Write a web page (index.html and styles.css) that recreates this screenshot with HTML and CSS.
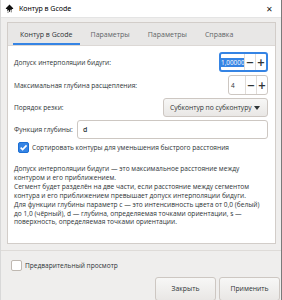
FILE: index.html
```html
<!DOCTYPE html>
<html lang="ru">
<head>
<meta charset="utf-8">
<title>Контур в Gcode</title>
<link rel="stylesheet" href="styles.css">
</head>
<body>
<div class="window">
  <div class="titlebar">
    <svg class="app-icon" width="9" height="9" viewBox="0 0 18 18"><path d="M9 1 L16 8 C17 9 16 10 15 10 L13 10 L14 12 C14.5 13 13.5 13.5 13 13 L11 11 L10 15 C10 16 8 16 8 15 L7.5 12 L5 13.5 C4 14 3.5 13 4 12.5 L5 10 L3 10 C2 10 1 9 2 8 Z" fill="#111"/><circle cx="6" cy="16" r="1.2" fill="#111"/><circle cx="12.5" cy="15.5" r="1" fill="#111"/></svg>
    <span class="title">Контур в Gcode</span>
    <span class="close">✕</span>
  </div>
  <div class="main">
    <div class="notebook">
      <div class="tabs">
        <div class="tab active">Контур в Gcode</div>
        <div class="tab">Параметры</div>
        <div class="tab">Параметры</div>
        <div class="tab">Справка</div>
      </div>
      <div class="page">
        <div class="row">
          <span class="label">Допуск интерполяции бидуги:</span>
          <div class="spin focused wide">
            <span class="spin-value"><span class="selected">1,00000</span></span>
            <span class="spin-btn">−</span>
            <span class="spin-btn">+</span>
          </div>
        </div>
        <div class="row">
          <span class="label">Максимальная глубина расщепления:</span>
          <div class="spin narrow">
            <span class="spin-value">4</span>
            <span class="spin-btn">−</span>
            <span class="spin-btn">+</span>
          </div>
        </div>
        <div class="row row-combo">
          <span class="label">Порядок резки:</span>
          <div class="combo">Субконтур по субконтуру <span class="arrow"></span></div>
        </div>
        <div class="row row-entry">
          <span class="label">Функция глубины:</span>
          <div class="entry">d</div>
        </div>
        <div class="check-row">
          <span class="checkbox checked"><svg width="9" height="9" viewBox="0 0 10 10"><path d="M1.8 5.2 L4 7.4 L8.4 2.6" fill="none" stroke="#fff" stroke-width="1.8"/></svg></span>
          <span class="check-label">Сортировать контуры для уменьшения быстрого расстояния</span>
        </div>
        <p class="help">Допуск интерполяции бидуги — это максимальное расстояние между контуром и его приближением.<br>Сегмент будет разделён на две части, если расстояние между сегментом контура и его приближением превышает допуск интерполяции бидуги.<br>Для функции глубины параметр c — это интенсивность цвета от 0,0 (белый) до 1,0 (чёрный), d — глубина, определяемая точками ориентации, s — поверхность, определяемая точками ориентации.</p>
      </div>
    </div>
  </div>
  <div class="separator"></div>
  <div class="preview-row">
    <span class="checkbox"></span>
    <span class="check-label">Предварительный просмотр</span>
  </div>
  <div class="buttons">
    <div class="button">Закрыть</div>
    <div class="button">Применить</div>
  </div>
</div>
</body>
</html>
```
FILE: styles.css
```css
* { box-sizing: border-box; }
html, body {
  margin: 0;
  padding: 0;
  width: 282px;
  height: 300px;
  overflow: hidden;
}
body {
  font-family: "Open Sans", "Noto Sans", sans-serif;
  font-size: 6.6px;
  color: #2e3436;
  background: #efeeed;
}
.window {
  height: 300px;
  display: flex;
  flex-direction: column;
  border-left: 1px solid #d8d8d8;
  border-right: 1px solid #7a7a7a;
}
.titlebar {
  height: 18px;
  flex: none;
  background: #fff;
  display: flex;
  align-items: center;
  padding-left: 4px;
  border-bottom: 1px solid #e4e4e4;
  font-family: "Noto Sans", sans-serif;
  font-size: 7px;
  color: #000;
}
.app-icon { margin-right: 5px; }
.title { flex: 1; }
.close {
  width: 20px;
  text-align: center;
  font-size: 8px;
  color: #222;
  margin-right: 2px;
}
.main {
  padding: 4px 5px 0 6px;
  flex: none;
}
.notebook {
  height: 222px;
  border: 1px solid #d2cdc9;
  display: flex;
  flex-direction: column;
  background: #fff;
}
.tabs {
  height: 23px;
  flex: none;
  background: #e8e7e6;
  display: flex;
  padding-left: 5px;
  border-bottom: 1px solid #dcd8d5;
}
.tab {
  padding: 0 7px;
  margin-right: 4px;
  display: flex;
  align-items: center;
  color: #5e6466;
  font-size: 7px;
  border-bottom: 2px solid transparent;
  padding-top: 2px;
}
.tab.active {
  color: #2e3436;
  border-bottom-color: #3584e4;
}
.page {
  flex: 1;
  padding: 6px 7px 0 6px;
  display: flex;
  flex-direction: column;
}
.row {
  height: 20px;
  display: flex;
  align-items: center;
  justify-content: space-between;
  margin-bottom: 3px;
}
.row-combo, .row-entry { height: 19px; }
.row-entry { margin-bottom: 2px; }
.label { white-space: nowrap; }
.spin {
  height: 100%;
  display: flex;
  border: 1px solid #cdc7c2;
  border-radius: 3px;
  background: #fff;
}
.spin.focused {
  border: 2px solid #3584e4;
}
.spin.wide { width: 49px; }
.spin.narrow { width: 40px; }
.spin-value {
  flex: 1;
  display: flex;
  align-items: center;
  padding-left: 2px;
  overflow: hidden;
  white-space: nowrap;
  font-size: 6.4px;
}
.spin.focused .spin-value { padding-left: 0; }
.selected {
  background: #3584e4;
  color: #fff;
}
.spin-btn {
  width: 11px;
  flex: none;
  display: flex;
  align-items: center;
  justify-content: center;
  border-left: 1px solid #e0dcd8;
  font-size: 10px;
  font-weight: bold;
  color: #2e3436;
  font-family: "DejaVu Sans", sans-serif;
}
.combo {
  width: 105px;
  height: 100%;
  border: 1px solid #cdc7c2;
  border-radius: 3px;
  background: linear-gradient(#f7f7f6, #e9e7e5);
  display: flex;
  align-items: center;
  justify-content: space-between;
  padding: 0 7px 0 6px;
  white-space: nowrap;
  font-size: 6.7px;
}
.arrow {
  width: 0;
  height: 0;
  border-left: 3.5px solid transparent;
  border-right: 3.5px solid transparent;
  border-top: 4px solid #2e3436;
}
.entry {
  width: 191px;
  height: 100%;
  border: 1px solid #cdc7c2;
  border-radius: 3px;
  display: flex;
  align-items: center;
  padding-left: 5px;
  font-weight: 600;
  font-size: 7px;
}
.check-row, .preview-row {
  display: flex;
  align-items: center;
  height: 13px;
}
.check-row { padding-left: 4px; }
.checkbox {
  width: 11px;
  height: 11px;
  flex: none;
  border: 1px solid #bfb8b1;
  border-radius: 2px;
  background: #fff;
  display: flex;
  align-items: center;
  justify-content: center;
  margin-right: 3px;
}
.checkbox.checked {
  background: #3584e4;
  border-color: #1c6fd4;
}
.help {
  margin: 11px 0 0 0;
  font-size: 6.6px;
  line-height: 8.9px;
  color: #2e3436;
}
.separator {
  height: 1px;
  background: #dedbd8;
  margin-top: 6px;
  flex: none;
}
.preview-row {
  margin-top: 9px;
  padding-left: 10px;
}
.buttons {
  display: flex;
  justify-content: flex-end;
  gap: 3px;
  margin-top: 6px;
  padding-right: 1px;
}
.button {
  width: 61px;
  height: 24px;
  border: 1px solid #cdc7c2;
  border-radius: 3px;
  background: linear-gradient(#f7f7f6, #e9e7e5);
  display: flex;
  align-items: center;
  justify-content: center;
  padding-bottom: 2px;
  font-size: 6.8px;
}
```
